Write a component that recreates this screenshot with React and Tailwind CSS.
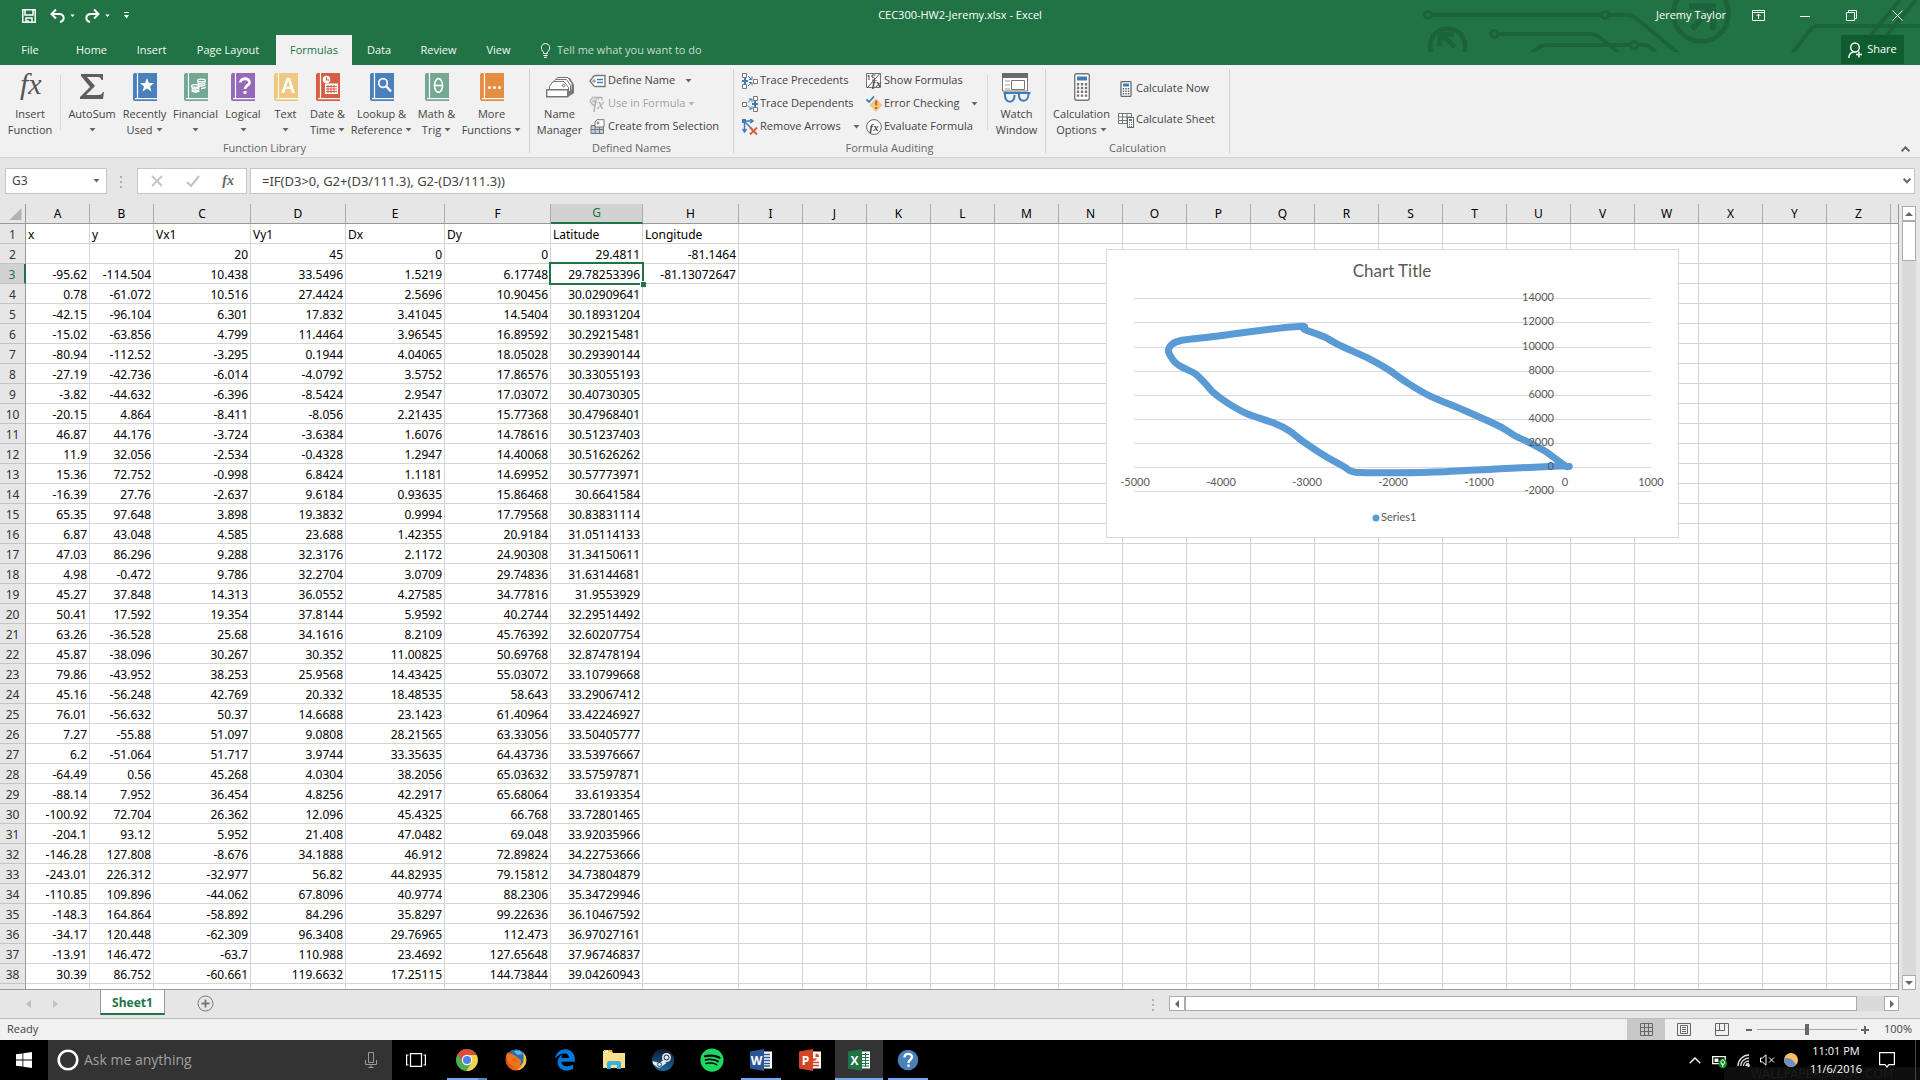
import { FaEdgeLegacy, FaSpotify } from 'react-icons/fa'

const UI_FONT = "font-['Open_Sans','Noto_Sans',sans-serif]"
const CELL_FONT = "font-['Noto_Sans','Open_Sans',sans-serif]"

const COLUMNS = [
  { id: 'A', width: 64 },
  { id: 'B', width: 64 },
  { id: 'C', width: 97 },
  { id: 'D', width: 95 },
  { id: 'E', width: 99 },
  { id: 'F', width: 106 },
  { id: 'G', width: 92 },
  { id: 'H', width: 96 },
  ...'IJKLMNOPQRSTUVWXYZ'.split('').map((id) => ({ id, width: 64 })),
]

const ROWS = `x|y|Vx1|Vy1|Dx|Dy|Latitude|Longitude
||20|45|0|0|29.4811|-81.1464
-95.62|-114.504|10.438|33.5496|1.5219|6.17748|29.78253396|-81.13072647
0.78|-61.072|10.516|27.4424|2.5696|10.90456|30.02909641
-42.15|-96.104|6.301|17.832|3.41045|14.5404|30.18931204
-15.02|-63.856|4.799|11.4464|3.96545|16.89592|30.29215481
-80.94|-112.52|-3.295|0.1944|4.04065|18.05028|30.29390144
-27.19|-42.736|-6.014|-4.0792|3.5752|17.86576|30.33055193
-3.82|-44.632|-6.396|-8.5424|2.9547|17.03072|30.40730305
-20.15|4.864|-8.411|-8.056|2.21435|15.77368|30.47968401
46.87|44.176|-3.724|-3.6384|1.6076|14.78616|30.51237403
11.9|32.056|-2.534|-0.4328|1.2947|14.40068|30.51626262
15.36|72.752|-0.998|6.8424|1.1181|14.69952|30.57773971
-16.39|27.76|-2.637|9.6184|0.93635|15.86468|30.6641584
65.35|97.648|3.898|19.3832|0.9994|17.79568|30.83831114
6.87|43.048|4.585|23.688|1.42355|20.9184|31.05114133
47.03|86.296|9.288|32.3176|2.1172|24.90308|31.34150611
4.98|-0.472|9.786|32.2704|3.0709|29.74836|31.63144681
45.27|37.848|14.313|36.0552|4.27585|34.77816|31.9553929
50.41|17.592|19.354|37.8144|5.9592|40.2744|32.29514492
63.26|-36.528|25.68|34.1616|8.2109|45.76392|32.60207754
45.87|-38.096|30.267|30.352|11.00825|50.69768|32.87478194
79.86|-43.952|38.253|25.9568|14.43425|55.03072|33.10799668
45.16|-56.248|42.769|20.332|18.48535|58.643|33.29067412
76.01|-56.632|50.37|14.6688|23.1423|61.40964|33.42246927
7.27|-55.88|51.097|9.0808|28.21565|63.33056|33.50405777
6.2|-51.064|51.717|3.9744|33.35635|64.43736|33.53976667
-64.49|0.56|45.268|4.0304|38.2056|65.03632|33.57597871
-88.14|7.952|36.454|4.8256|42.2917|65.68064|33.6193354
-100.92|72.704|26.362|12.096|45.4325|66.768|33.72801465
-204.1|93.12|5.952|21.408|47.0482|69.048|33.92035966
-146.28|127.808|-8.676|34.1888|46.912|72.89824|34.22753666
-243.01|226.312|-32.977|56.82|44.82935|79.15812|34.73804879
-110.85|109.896|-44.062|67.8096|40.9774|88.2306|35.34729946
-148.3|164.864|-58.892|84.296|35.8297|99.22636|36.10467592
-34.17|120.448|-62.309|96.3408|29.76965|112.473|36.97027161
-13.91|146.472|-63.7|110.988|23.4692|127.65648|37.96746837
30.39|86.752|-60.661|119.6632|17.25115|144.73844|39.04260943
`
  .split('\n')
  .map((line) => line.split('|'))

const ACTIVE_COL = 6
const ACTIVE_ROW = 2

// [x, y] points of Series1
const SERIES = [
  [49, 55], [0, 110], [-227, 1298], [-404, 1990], [-582, 2597], [-760, 3370], [-1160, 4670],
  [-1560, 5857], [-1827, 6960], [-2049, 8066], [-2271, 8977], [-2627, 10136], [-2804, 10826],
  [-3027, 11430], [-3044, 11690], [-3404, 11460], [-4049, 10853], [-4449, 10522], [-4573, 10136],
  [-4605, 9556], [-4538, 8756], [-4449, 8287], [-4293, 7735], [-4182, 6960], [-4093, 6243],
  [-3916, 5304], [-3693, 4420], [-3382, 3648], [-3204, 3012], [-3027, 2045], [-2782, 885],
  [-2560, 0], [-2440, -440], [-1960, -470], [-1382, -386], [-804, -166], [0, 110],
]

const chartX = (v) => 459 + v * 0.0861
const chartY = (v) => 218 - v * 0.01205

// Catmull-Rom curve through the points, as cubic segments
function smoothPath(points) {
  let d = `M${points[0]}`
  for (let i = 0; i < points.length - 1; i++) {
    const [a, b, c, e] = [points[i - 1] || points[i], points[i], points[i + 1], points[i + 2] || points[i + 1]]
    const c1 = [b[0] + (c[0] - a[0]) / 8, b[1] + (c[1] - a[1]) / 8]
    const c2 = [c[0] - (e[0] - b[0]) / 8, c[1] - (e[1] - b[1]) / 8]
    d += `C${c1} ${c2} ${c}`
  }
  return d
}

function Caret({ className = 'text-[#666]' }) {
  return (
    <svg width="7" height="4" viewBox="0 0 7 4" className={`inline-block shrink-0 ${className}`} aria-hidden="true">
      <path d="M0.5 0h6L3.5 3.5z" fill="currentColor" />
    </svg>
  )
}

/* ---------- title bar ---------- */

function Circuit() {
  return (
    <svg
      className="pointer-events-none absolute top-0 right-0"
      width="500"
      height="52"
      viewBox="0 0 500 52"
      fill="none"
      stroke="#1c633c"
      strokeWidth="4"
      aria-hidden="true"
    >
      <circle cx="8" cy="15" r="3.5" strokeWidth="3" />
      <path d="M12 15h169M190 15h18q4 0 8 3l43 36" />
      <circle cx="185" cy="15" r="3.5" strokeWidth="3" />
      <circle cx="74" cy="34" r="3.5" strokeWidth="3" />
      <path d="M78 34h93q4 0 8 3l19 15M112 52l8-5q3-2 7-2h83" />
      <circle cx="214" cy="45" r="3.5" strokeWidth="3" />
      <path d="M218 45h6q4 0 7 3l5 4" />
      <path d="M12 54a17.500 17.500 0 1 1 31 0" strokeWidth="4.500" />
      <path d="M20 46V34h14M21 34l14 13" strokeWidth="5" />
      <path d="M260 -4a27.500 27.500 0 1 0 42 0" strokeWidth="5" />
      <path d="M269 6.500h24V30M292 7l-20 22" strokeWidth="6" />
      <path d="M372 53l20-25q2-2 5-2h105M450 36L480 0M466 36L496 0" />
    </svg>
  )
}

function TitleBar() {
  return (
    <div className="relative grid h-[35px] grid-cols-[1fr_auto_1fr] items-center pb-1 text-[11px] text-white">
      <div className="flex items-center pl-[22px]">
        <button type="button" aria-label="Save">
          <svg width="14" height="14" viewBox="0 0 14 14" fill="none" stroke="#fff" strokeWidth="1.500">
            <path d="M0.8 0.8h12.400v12.400H0.800zM3 1v5h8V1M4 13V9h6v4M6 11v2" />
          </svg>
        </button>
        <button type="button" aria-label="Undo" className="ml-[14px] flex items-center gap-[5px]">
          <svg width="15" height="14" viewBox="0 0 15 14" fill="none" stroke="#fff" strokeWidth="2">
            <path d="M6 0.500L1.500 5 6 9.500M2 5h7c6 0 6 7 1 8" />
          </svg>
          <Caret className="w-[5px] text-white" />
        </button>
        <button type="button" aria-label="Redo" className="ml-[10px] flex items-center gap-[5px]">
          <svg width="15" height="14" viewBox="0 0 15 14" fill="none" stroke="#fff" strokeWidth="2">
            <path d="M9 0.500L13.500 5 9 9.500M13 5H6C0 5 0 12 5 13" />
          </svg>
          <Caret className="w-[5px] text-white" />
        </button>
        <button type="button" aria-label="Customize Quick Access Toolbar" className="ml-[13px]">
          <svg width="7" height="7" viewBox="0 0 7 7" fill="#fff">
            <path d="M1 0h5v1H1zM1 3h5L3.500 6.500z" />
          </svg>
        </button>
      </div>
      <div>CEC300-HW2-Jeremy.xlsx - Excel</div>
      <div className="z-10 flex items-center justify-end pr-[17px]">
        <span>Jeremy Taylor</span>
        <button type="button" aria-label="Ribbon Display Options" className="ml-[26px]">
          <svg width="13" height="11" viewBox="0 0 13 11" fill="none" stroke="#fff">
            <path d="M0.500 0.500h12v10h-12zM0.500 2.500h12M6.500 9V4M4.500 6l2-2 2 2" />
          </svg>
        </button>
        <button type="button" aria-label="Minimize" className="ml-[35px]">
          <svg width="10" height="10" viewBox="0 0 10 10" stroke="#fff">
            <path d="M0 5.500h10" />
          </svg>
        </button>
        <button type="button" aria-label="Restore" className="ml-[36px]">
          <svg width="11" height="11" viewBox="0 0 11 11" fill="none" stroke="#fff">
            <path d="M0.500 2.500h8v8h-8zM2.500 2.500v-2h8v8h-2" />
          </svg>
        </button>
        <button type="button" aria-label="Close" className="ml-[35px]">
          <svg width="11" height="11" viewBox="0 0 11 11" fill="none" stroke="#fff">
            <path d="M0.500 0.500l10 10M10.500 0.500l-10 10" />
          </svg>
        </button>
      </div>
    </div>
  )
}

const TABS = [
  ['File', 'w-[60px]'],
  ['Home', 'w-[63px]'],
  ['Insert', 'w-[57px]'],
  ['Page Layout', 'w-24'],
  ['Formulas', 'w-[76px]'],
  ['Data', 'w-[54px]'],
  ['Review', 'w-[65px]'],
  ['View', 'w-[55px]'],
]

function TabRow() {
  return (
    <div className="relative flex h-[30px] text-[11px] text-[#f3f8f5]">
      {TABS.map(([name, width]) => (
        <button
          key={name}
          type="button"
          className={`${width} ${name === 'Formulas' ? 'bg-[#f1f1f1] text-[#217346]' : ''}`}
        >
          {name}
        </button>
      ))}
      <button type="button" className="ml-[14px] flex items-center gap-[6px] text-[#c3dccd]">
        <svg width="11" height="15" viewBox="0 0 11 15" fill="none" stroke="#fff">
          <path d="M3.500 10.500V9C0 6 1 0.600 5.500 0.600S11 6 7.500 9v1.500zM3.500 12.500h4M4 14.300h3" />
        </svg>
        Tell me what you want to do
      </button>
      <button
        type="button"
        className="mr-4 ml-auto flex h-[29px] w-[63px] items-center justify-center gap-[5px] bg-[#0f5c2f] text-white"
      >
        <svg width="14" height="16" viewBox="0 0 14 16" fill="none" stroke="#fff" strokeWidth="1.400">
          <path d="M7 1a4 4.200 0 0 1 0 9 4 4.200 0 0 1 0-9zM0.800 16c0-3.500 1.500-5 4.200-6M8 12.500h6M11 9.500v6" />
        </svg>
        Share
      </button>
    </div>
  )
}

/* ---------- ribbon ---------- */

function Book({ color, children }) {
  return (
    <svg width="24" height="28" viewBox="0 0 24 28" aria-hidden="true">
      <path d="M2 0h22v28H2a2 2 0 0 1-2-2V2a2 2 0 0 1 2-2z" fill={color} />
      <path d="M4.500 0v25M2 25.700h22" stroke="#fff" strokeWidth="1.200" fill="none" />
      <g fill="#fff">{children}</g>
    </svg>
  )
}

const ICONS = {
  fx: (
    <svg width="28" height="28" viewBox="0 0 28 28" className="overflow-visible">
      <text x="4" y="21" fontSize="30" fontStyle="italic" fontFamily="Liberation Serif, serif" fill="#555">
        fx
      </text>
    </svg>
  ),
  sigma: (
    <svg width="24" height="28" viewBox="0 0 24 28" fill="#5e5e5e">
      <path d="M1 1h22v6h-1.500c-.5-2-1.500-3-4-3H7l8 9-9 9h12c3 0 4-1 5-3h1l-1 7H0v-2l10-10L1 3z" />
    </svg>
  ),
  recent: (
    <Book color="#4a80bb">
      <path d="M14 5l2 5h5l-4 3.500 1.500 5L14 15.500 9.500 18.500l1.500-5L7 10h5z" />
    </Book>
  ),
  financial: (
    <Book color="#74a794">
      <g fill="none" stroke="#fff" strokeWidth="1.300">
        <ellipse cx="17.500" cy="7.500" rx="4" ry="1.400" />
        <path d="M13.500 9.500c1 2 7 2 8 0M13.500 11.500c1 2 7 2 8 0M17 15.500c2 0 4-.5 4.500-1.500" />
        <ellipse cx="11.500" cy="13" rx="4" ry="1.400" />
        <path d="M7.500 14.500c1 2 7 2 8 0M7.500 16.500c1 2 7 2 8 0M7.500 18c1 1.500 7 1.500 8 0" />
      </g>
    </Book>
  ),
  logical: (
    <Book color="#9668b8">
      <path d="M9.500 9.500c0-5 9-5 9 0 0 3-4.500 3-4.500 6.500" fill="none" stroke="#fff" strokeWidth="2.800" />
      <path d="M12.500 18h3v3h-3z" />
    </Book>
  ),
  text: (
    <Book color="#edc87e">
      <path d="M12.500 5h3.500l5 15h-3l-1.200-4h-5.300L10.300 20h-3zM12.200 13.700h3.900L14.200 7.500z" />
    </Book>
  ),
  date: (
    <Book color="#d65f43">
      <circle cx="10.500" cy="6.500" r="3.800" />
      <path d="M10.500 4v3h2.500" stroke="#d65f43" fill="none" />
      <path d="M9 10.500h13v10.500H9z" />
      <path d="M10 13.500h11M10 16h11M10 18.500h11M12 12v8M15 12v8M18 12v8" stroke="#d65f43" fill="none" />
    </Book>
  ),
  lookup: (
    <Book color="#4a80bb">
      <g fill="none" stroke="#fff" strokeWidth="1.700">
        <circle cx="13" cy="10" r="4.300" />
        <path d="M16 13l5 5.500" strokeWidth="2.400" />
      </g>
    </Book>
  ),
  math: (
    <Book color="#74a794">
      <g fill="none" stroke="#fff" strokeWidth="1.700">
        <ellipse cx="13.500" cy="12.500" rx="4" ry="6.800" />
        <path d="M9.500 12.500h8" />
      </g>
    </Book>
  ),
  more: (
    <Book color="#e58d42">
      <circle cx="9.500" cy="14.500" r="1.500" />
      <circle cx="14.500" cy="14.500" r="1.500" />
      <circle cx="19.500" cy="14.500" r="1.500" />
    </Book>
  ),
  names: (
    <svg width="28" height="28" viewBox="0 0 28 28" fill="#fff" stroke="#777">
      <path d="M22 5h2l4 7v8l-6 4z" fill="#777" stroke="none" />
      <path d="M8.500 9l3-4.500H22l4 6v6" />
      <path d="M6.500 11l3-4.500h11l4 6v6" />
      <path d="M3.500 16.500v-3l3.500-5h11l4.500 6v6" />
      <circle cx="17.500" cy="12.500" r="1.300" />
      <path d="M0.700 16.700h21v7h-21z" strokeWidth="1.400" />
    </svg>
  ),
  watch: (
    <svg width="29" height="30" viewBox="0 0 29 30" fill="none">
      <path d="M0.500 0.500h25V18h-25z" fill="#fff" stroke="#777" />
      <path d="M0 0h26v5H0z" fill="#6a6a6a" />
      <path d="M9.500 7.500h13v9h-13z" stroke="#777" />
      <path d="M3 8h5M3 12h5M3 16h5" stroke="#999" />
      <g stroke="#3f7cba" strokeWidth="2">
        <path d="M1.500 20h27M3 21c-1 10 10 10 9.500 1M17 21c-1 9 9.500 9 9.500 0" fill="#f1f1f1" />
      </g>
    </svg>
  ),
  calculator: (
    <svg width="16" height="28" viewBox="0 0 16 28" fill="none">
      <rect x="0.700" y="0.700" width="18.600" height="26.600" rx="2" fill="none" />
      <rect x="0.700" y="0.700" width="14.600" height="26.600" rx="2" fill="#fff" stroke="#777" strokeWidth="1.400" />
      <path d="M3 3.500h10v4H3z" fill="#3f7cba" />
      <path d="M4 10v14M8 10v14M12 10v14" stroke="#777" strokeWidth="2.400" strokeDasharray="2.400 1.400" />
    </svg>
  ),
  define: (
    <svg width="17" height="16" viewBox="0 0 17 16" fill="none">
      <path d="M1 8l3.500-4.500q.7-1 2-1h9.500v11H6.500q-1.300 0-2-1z" fill="#fff" stroke="#777" strokeWidth="1.300" />
      <circle cx="5" cy="8" r="1.200" stroke="#777" />
      <path d="M8 6.500h6M8 9.500h6" stroke="#3f7cba" strokeWidth="1.300" />
    </svg>
  ),
  useFx: (
    <svg width="17" height="16" viewBox="0 0 17 16" fill="none" stroke="#b5b5b5">
      <path d="M6 9L4 9 1 5.500 3.500 1.500H13v3" strokeWidth="1.300" />
      <circle cx="4.500" cy="5" r="1" />
      <text x="4" y="13" fontSize="15" fontStyle="italic" fontFamily="Liberation Serif, serif" fill="#a5a5a5" stroke="none">
        fx
      </text>
    </svg>
  ),
  create: (
    <svg width="15" height="16" viewBox="0 0 15 16" fill="none">
      <path d="M1 6.500h12.500v8H1z" fill="#b9cfe8" stroke="#777" />
      <path d="M1 10.500h12M5 6v8.500M9.500 6v8.500" stroke="#777" />
      <path d="M5 8V3l2-2.300h7V8z" fill="#fff" stroke="#777" />
      <circle cx="8" cy="4" r="1" stroke="#777" />
    </svg>
  ),
  precedents: (
    <svg width="16" height="16" viewBox="0 0 16 16" fill="none">
      <path d="M0.500 0.500h4v4h-4zM0.500 11.500h4v4h-4zM11.500 6.500h4v4h-4z" fill="#fff" stroke="#777" />
      <path d="M0 8h6M3 5v6" stroke="#3f7cba" strokeWidth="2" />
      <path d="M6 3l3.500 3.500M6 13l3.500-3.500M7 6.500h3v-3M7 9.500h3v3" stroke="#3f7cba" />
    </svg>
  ),
  dependents: (
    <svg width="16" height="16" viewBox="0 0 16 16" fill="none">
      <path d="M11.500 0.500h4v4h-4zM11.500 11.500h4v4h-4zM0.500 6.500h4v4h-4z" fill="#fff" stroke="#777" />
      <path d="M10 8h6M13 5v6" stroke="#3f7cba" strokeWidth="2" />
      <path d="M6 6.500L9.500 3M6 9.500l3.500 3.500M7 3h3v3M7 13h3v-3" stroke="#3f7cba" />
    </svg>
  ),
  remove: (
    <svg width="16" height="16" viewBox="0 0 16 16" fill="none">
      <g stroke="#3f7cba" strokeWidth="1.500">
        <path d="M2 2h8M2.500 2v11M2 2l8 8" />
        <path d="M8 0l3 2-3 2M0.500 10l2 3 2-3" />
      </g>
      <path d="M0 0h4v4H0z" fill="#3f7cba" />
      <path d="M8 8.500l7 7M15 8.500l-7 7" stroke="#d65f43" strokeWidth="2" />
    </svg>
  ),
  show: (
    <svg width="16" height="16" viewBox="0 0 16 16" fill="none">
      <path d="M0.500 0.500h14v14h-14z" fill="#fff" stroke="#777" />
      <path d="M14 0.500L1 15" stroke="#555" />
      <path d="M3 2v5M1.500 3H3M9.500 2H6v2.300c3-.5 4 2.500 0 3" stroke="#444" />
      <text x="6" y="14" fontSize="11" fontStyle="italic" fontWeight="bold" fontFamily="Liberation Serif, serif" fill="#444">
        fx
      </text>
    </svg>
  ),
  error: (
    <svg width="16" height="16" viewBox="0 0 16 16" fill="none">
      <path d="M10 3l6 6-6 6.500L4 9z" fill="#edc87e" stroke="#edc87e" strokeLinejoin="round" />
      <path d="M9.200 4.500h2v5h-2zM9.200 11h2v2h-2z" fill="#d2572f" />
      <path d="M0.500 3.500L3 6l5-5.500" stroke="#3f7cba" strokeWidth="1.800" />
    </svg>
  ),
  evaluate: (
    <svg width="16" height="16" viewBox="0 0 16 16">
      <circle cx="8" cy="8" r="7.400" fill="#fff" stroke="#666" />
      <text x="3.500" y="11.500" fontSize="11" fontStyle="italic" fontWeight="bold" fontFamily="Liberation Serif, serif" fill="#444">
        fx
      </text>
    </svg>
  ),
  calcNow: (
    <svg width="12" height="16" viewBox="0 0 12 16" fill="none">
      <rect x="1" y="0.600" width="10" height="14.800" rx="1" fill="#fff" stroke="#666" strokeWidth="1.300" />
      <path d="M3 2.500h6v3H3z" fill="#3f7cba" />
      <path d="M3.500 7v7M6 7v7M8.500 7v7" stroke="#666" strokeWidth="1.500" strokeDasharray="1.500 1" />
    </svg>
  ),
  calcSheet: (
    <svg width="16" height="16" viewBox="0 0 16 16" fill="none">
      <path d="M0.500 1.500h13v10h-13zM0.500 5h13M0.500 8.500h13M4.500 1.500v10M9 1.500v10" fill="#fff" stroke="#777" />
      <rect x="9.500" y="5.500" width="6" height="10" fill="#fff" stroke="#666" />
      <path d="M11 7h3v2h-3z" fill="#3f7cba" />
      <path d="M11.500 10v5M13.500 10v5" stroke="#666" strokeDasharray="1 1" />
    </svg>
  ),
}

function BigButton({ icon, lines, width, caret }) {
  return (
    <button type="button" className={`${width} flex shrink-0 flex-col items-center whitespace-nowrap`}>
      <span className="mb-[5px] flex h-7 items-start">{ICONS[icon]}</span>
      <span className="leading-4">{lines[0]}</span>
      <span className="flex h-4 items-center gap-[3px] leading-4">
        {lines[1]}
        {caret && <Caret />}
      </span>
    </button>
  )
}

function SmallButton({ icon, label, caret, disabled, gap = 'gap-2' }) {
  return (
    <button
      type="button"
      disabled={disabled}
      className={`flex h-[23px] items-center whitespace-nowrap ${disabled ? 'text-[#a3a3a3]' : ''}`}
    >
      <span className="mr-[2px] flex w-[17px] justify-center">{ICONS[icon]}</span>
      <span className={`flex items-center ${gap}`}>
        {label}
        {caret && <Caret className={disabled ? 'text-[#b5b5b5]' : 'text-[#666]'} />}
      </span>
    </button>
  )
}

function Group({ label, width, children }) {
  return (
    <section aria-label={label} className={`${width} flex shrink-0`}>
      <div className="flex min-w-0 flex-1 flex-col justify-between pt-2">
        <div className="flex">{children}</div>
        <div className="pb-px text-center leading-4 text-[#666]">{label}</div>
      </div>
      <div className="my-1 w-px bg-[#d2d2d2]" />
    </section>
  )
}

function Ribbon() {
  return (
    <div className="flex h-[93px] border-b border-[#d2d2d2] bg-[#f1f1f1] text-[11px] text-[#444]">
      <Group label="Function Library" width="w-[530px]">
        <BigButton icon="fx" lines={['Insert', 'Function']} width="w-[60px]" />
        <div className="mt-[2px] mr-[5px] h-[55px] w-px bg-[#d8d8d8]" />
        <BigButton icon="sigma" lines={['AutoSum']} width="w-[52px]" caret />
        <BigButton icon="recent" lines={['Recently', 'Used']} width="w-[53px]" caret />
        <BigButton icon="financial" lines={['Financial']} width="w-[49px]" caret />
        <BigButton icon="logical" lines={['Logical']} width="w-[46px]" caret />
        <BigButton icon="text" lines={['Text']} width="w-[39px]" caret />
        <BigButton icon="date" lines={['Date &', 'Time']} width="w-[45px]" caret />
        <BigButton icon="lookup" lines={['Lookup &', 'Reference']} width="w-[63px]" caret />
        <BigButton icon="math" lines={['Math &', 'Trig']} width="w-[47px]" caret />
        <BigButton icon="more" lines={['More', 'Functions']} width="w-[63px]" caret />
      </Group>
      <Group label="Defined Names" width="w-[204px]">
        <BigButton icon="names" lines={['Name', 'Manager']} width="w-[59px]" />
        <div className="-mt-1">
          <SmallButton icon="define" label="Define Name" caret gap="gap-[10px]" />
          <SmallButton icon="useFx" label="Use in Formula" caret disabled gap="gap-[3px]" />
          <SmallButton icon="create" label="Create from Selection" />
        </div>
      </Group>
      <Group label="Formula Auditing" width="w-[312px]">
        <div className="-mt-1 ml-[7px] w-[124px]">
          <SmallButton icon="precedents" label="Trace Precedents" />
          <SmallButton icon="dependents" label="Trace Dependents" />
          <SmallButton icon="remove" label="Remove Arrows" caret gap="gap-3" />
        </div>
        <div className="-mt-1 w-[122px]">
          <SmallButton icon="show" label="Show Formulas" />
          <SmallButton icon="error" label="Error Checking" caret gap="gap-3" />
          <SmallButton icon="evaluate" label="Evaluate Formula" />
        </div>
        <div className="mt-[2px] h-[55px] w-px bg-[#d8d8d8]" />
        <BigButton icon="watch" lines={['Watch', 'Window']} width="w-[57px]" />
      </Group>
      <Group label="Calculation" width="w-[184px]">
        <BigButton icon="calculator" lines={['Calculation', 'Options']} width="w-[71px]" caret />
        <div className="flex flex-col gap-2 pt-1">
          <SmallButton icon="calcNow" label="Calculate Now" />
          <SmallButton icon="calcSheet" label="Calculate Sheet" />
        </div>
      </Group>
      <button type="button" aria-label="Collapse the Ribbon" className="mt-auto mr-[10px] mb-[5px] ml-auto">
        <svg width="9" height="6" viewBox="0 0 9 6" fill="none" stroke="#666" strokeWidth="2">
          <path d="M0.700 5.300l3.800-4 3.800 4" />
        </svg>
      </button>
    </div>
  )
}

/* ---------- formula bar ---------- */

function FormulaBar() {
  return (
    <div className={`${CELL_FONT} flex h-[46px] items-start bg-[#e6e6e6] pt-[10px] pr-[5px] pl-[5px] text-[13px] text-[#444]`}>
      <div className="flex h-[26px] w-[102px] items-center border border-[#c6c6c6] bg-white pr-[6px]">
        <input aria-label="Name Box" defaultValue="G3" className="min-w-0 flex-1 bg-transparent pl-[6px] text-xs outline-none" />
        <Caret className="text-[#666]" />
      </div>
      <div className="mx-[13px] mt-2 flex w-1 flex-col gap-[3px]">
        <i className="size-[2px] bg-[#b0b0b0]" />
        <i className="size-[2px] bg-[#b0b0b0]" />
        <i className="size-[2px] bg-[#b0b0b0]" />
      </div>
      <div className="flex h-[26px] w-[110px] items-center justify-between border border-[#c6c6c6] bg-white pr-3 pl-[13px]">
        <button type="button" aria-label="Cancel">
          <svg width="12" height="12" viewBox="0 0 12 12" stroke="#c4c4c4" strokeWidth="1.800">
            <path d="M1 1l10 10M11 1L1 11" />
          </svg>
        </button>
        <button type="button" aria-label="Enter">
          <svg width="14" height="12" viewBox="0 0 14 12" fill="none" stroke="#c4c4c4" strokeWidth="2.200">
            <path d="M1 7l4 4 8-10" />
          </svg>
        </button>
        <button
          type="button"
          aria-label="Insert Function"
          className="pb-px font-['Liberation_Serif',serif] text-sm leading-none font-bold text-[#666] italic"
        >
          fx
        </button>
      </div>
      <div className="ml-[3px] flex h-[26px] flex-1 items-center border border-[#c6c6c6] bg-white pr-[3px]">
        <input
          aria-label="Formula Bar"
          defaultValue="=IF(D3>0, G2+(D3/111.3), G2-(D3/111.3))"
          className="min-w-0 flex-1 bg-transparent pt-px pl-[11px] outline-none"
        />
        <button type="button" aria-label="Expand Formula Bar">
          <svg width="8" height="6" viewBox="0 0 8 6" fill="none" stroke="#666" strokeWidth="2">
            <path d="M0.700 0.700L4 4.300 7.300 0.700" />
          </svg>
        </button>
      </div>
    </div>
  )
}

/* ---------- sheet ---------- */

function Chart() {
  const line = smoothPath(SERIES.map(([x, y]) => [chartX(x), chartY(y)]))
  const yTicks = [14000, 12000, 10000, 8000, 6000, 4000, 2000, 0, -2000]
  const xTicks = [-5000, -4000, -3000, -2000, -1000, 0, 1000]

  return (
    <div className="absolute top-[45px] left-[1106px] border border-[#d9d9d9] bg-white">
      <svg
        width="571"
        height="287"
        viewBox="1 1 571 287"
        className="block font-['Lato',sans-serif]"
        fill="#595959"
        role="img"
        aria-label="Scatter chart of Series1"
      >
        <text x="286" y="28" fontSize="17" textAnchor="middle">
          Chart Title
        </text>
        {yTicks.map((t) => (
          <path key={t} d={`M28 ${Math.round(chartY(t)) + 0.5}h517`} stroke="#d9d9d9" />
        ))}
        <path d={line} fill="none" stroke="#5b9bd5" strokeWidth="7" strokeLinejoin="round" strokeLinecap="round" />
        <g fontSize="11">
          {yTicks.map((t) => (
            <text key={t} x="448" y={Math.round(chartY(t)) + 3} textAnchor="end">
              {t}
            </text>
          ))}
          {xTicks.map((t) => (
            <text key={t} x={Math.round(chartX(t))} y="237" textAnchor="middle">
              {t}
            </text>
          ))}
          <circle cx="270" cy="269" r="3.500" fill="#5b9bd5" />
          <text x="275" y="272">
            Series1
          </text>
        </g>
      </svg>
    </div>
  )
}

function Sheet() {
  return (
    <div className="relative min-w-0 flex-1 overflow-hidden border-r border-b border-[#999] bg-white">
      <table className={`${CELL_FONT} w-[1955px] table-fixed border-separate border-spacing-0 text-xs text-black`}>
        <colgroup>
          <col className="w-[26px]" />
          {COLUMNS.map((c) => (
            <col key={c.id} style={{ width: c.width }} />
          ))}
          <col className="w-16" />
        </colgroup>
        <thead>
          <tr className="h-5 bg-[#e6e6e6]">
            <th className="border-r border-b border-[#999] p-0">
              <svg width="13" height="12" viewBox="0 0 13 12" className="ml-auto mr-[3px]" aria-label="Select all">
                <path d="M12.500 0v12H0.500z" fill="#b2b2b2" />
              </svg>
            </th>
            {COLUMNS.map((c, i) => (
              <th
                key={c.id}
                scope="col"
                className={`h-5 border-r border-r-[#ababab] p-0 leading-[18px] font-normal ${
                  i === ACTIVE_COL
                    ? 'border-b-2 border-b-[#217346] bg-[#d2d2d2] text-[#217346]'
                    : 'border-b border-b-[#999]'
                }`}
              >
                {c.id}
              </th>
            ))}
            <th className="border-b border-[#999] p-0" />
          </tr>
        </thead>
        <tbody>
          {ROWS.map((row, r) => (
            <tr key={r} className="h-5">
              <th
                scope="row"
                className={`h-5 border-r border-b border-b-[#c4c4c4] px-0 pt-[2px] pb-0 leading-[17px] font-normal ${
                  r === ACTIVE_ROW
                    ? 'border-r-2 border-r-[#217346] bg-[#d2d2d2] text-[#217346]'
                    : 'border-r-[#999] bg-[#e6e6e6] text-[#333]'
                }`}
              >
                {row.length > 1 && r + 1}
              </th>
              {COLUMNS.map((c, i) => (
                <td
                  key={c.id}
                  className={`relative h-5 border-r border-b border-[#d4d4d4] px-[2px] pt-[2px] pb-0 leading-[17px] ${
                    r === 0 ? 'text-left' : 'text-right'
                  }`}
                >
                  {row[i]}
                  {r === ACTIVE_ROW && i === ACTIVE_COL && (
                    <span className="absolute -inset-[2px] z-10 border-2 border-[#217346]">
                      <span className="absolute -right-1 -bottom-1 size-[6px] border-t border-l border-white bg-[#217346]" />
                    </span>
                  )}
                </td>
              ))}
              <td className="border-b border-[#d4d4d4] p-0" />
            </tr>
          ))}
        </tbody>
      </table>
      <Chart />
    </div>
  )
}

function ScrollArrow({ label, d, className }) {
  return (
    <button
      type="button"
      aria-label={label}
      className={`${className} flex shrink-0 items-center justify-center border border-[#ababab] bg-white`}
    >
      <svg width="8" height="8" viewBox="0 0 8 8" fill="#666">
        <path d={d} />
      </svg>
    </button>
  )
}

function SheetTabs() {
  return (
    <div className="flex h-[28px] items-start bg-[#e6e6e6]">
      <div className="flex h-7 w-[100px] items-center gap-[22px] pl-[26px]">
        <button type="button" aria-label="Previous sheet" disabled>
          <svg width="5" height="8" viewBox="0 0 5 8">
            <path d="M5 0v8L0 4z" fill="#c0c0c0" />
          </svg>
        </button>
        <button type="button" aria-label="Next sheet" disabled>
          <svg width="5" height="8" viewBox="0 0 5 8">
            <path d="M0 0v8l5-4z" fill="#c0c0c0" />
          </svg>
        </button>
      </div>
      <button
        type="button"
        className={`${CELL_FONT} h-[25px] w-[65px] border-x border-b-2 border-x-[#999] border-b-[#217346] bg-white pt-[2px] text-xs font-bold text-[#217346]`}
      >
        Sheet1
      </button>
      <button type="button" aria-label="New sheet" className="mt-[5px] ml-8">
        <svg width="17" height="17" viewBox="0 0 17 17" fill="none" stroke="#777">
          <circle cx="8.500" cy="8.500" r="7.500" />
          <path d="M8.500 4.500v8M4.500 8.500h8" strokeWidth="1.800" />
        </svg>
      </button>
      <div className="mt-[9px] mr-[15px] ml-auto flex flex-col gap-[3px]">
        <i className="size-[2px] bg-[#b0b0b0]" />
        <i className="size-[2px] bg-[#b0b0b0]" />
        <i className="size-[2px] bg-[#b0b0b0]" />
      </div>
      <div className="mt-[6px] mr-[21px] flex h-[15px] w-[38%] bg-[#dadada]">
        <ScrollArrow label="Scroll left" d="M6 0v8L2 4z" className="w-4" />
        <div className="mr-[27px] flex-1 border border-[#ababab] bg-white" />
        <ScrollArrow label="Scroll right" d="M2 0v8l4-4z" className="w-[15px]" />
      </div>
    </div>
  )
}

function StatusBar() {
  return (
    <div className="flex h-[22px] items-center border-t border-[#bdbdbd] bg-[#f1f1f1] text-[11px] text-[#444]">
      <span className="pl-[7px]">Ready</span>
      <div className="ml-auto flex h-full">
        <button type="button" aria-label="Normal" className="flex w-[38px] items-center justify-center bg-[#c8c8c8]">
          <svg width="13" height="13" viewBox="0 0 13 13" fill="none" stroke="#666">
            <path d="M0.500 0.500h12v12h-12zM0.500 4.500h12M0.500 8.500h12M4.500 0.500v12M8.500 0.500v12" />
          </svg>
        </button>
        <button type="button" aria-label="Page Layout" className="flex w-[38px] items-center justify-center">
          <svg width="14" height="13" viewBox="0 0 14 13" fill="none" stroke="#666">
            <path d="M0.500 0.500h13v12h-13zM3.500 2.500h7v8h-7zM5 4.500h4M5 6.500h4M5 8.500h4" />
          </svg>
        </button>
        <button type="button" aria-label="Page Break Preview" className="flex w-[38px] items-center justify-center">
          <svg width="14" height="13" viewBox="0 0 14 13" fill="none" stroke="#666">
            <path d="M0.500 0.500h13v12h-13zM4.500 0.500v7M9.500 0.500v7M0.500 7.500h9" />
          </svg>
        </button>
      </div>
      <button type="button" aria-label="Zoom out" className="ml-[5px] h-[2px] w-[6px] bg-[#666]" />
      <div className="relative ml-[5px] flex w-[100px] items-center">
        <div className="absolute h-px w-full bg-[#a6a6a6]" />
        <input
          type="range"
          min="0"
          max="100"
          defaultValue="50"
          aria-label="Zoom"
          className="relative h-[11px] w-full appearance-none bg-transparent [&::-webkit-slider-thumb]:h-[11px] [&::-webkit-slider-thumb]:w-1 [&::-webkit-slider-thumb]:appearance-none [&::-webkit-slider-thumb]:bg-[#666]"
        />
      </div>
      <button type="button" aria-label="Zoom in" className="ml-1">
        <svg width="8" height="8" viewBox="0 0 8 8" stroke="#666" strokeWidth="2">
          <path d="M0 4h8M4 0v8" />
        </svg>
      </button>
      <span className="w-[51px] pr-2 text-right">100%</span>
    </div>
  )
}

/* ---------- taskbar ---------- */

function OfficeIcon({ color, letter, children }) {
  return (
    <svg width="23" height="22" viewBox="0 0 23 22">
      <path d="M11 2.500h11v17H11z" fill="#fff" />
      {children}
      <path d="M0 2.500L14 0v22L0 19.500z" fill={color} />
      <text x="6.500" y="15.500" fontSize="12" fontWeight="bold" textAnchor="middle" fontFamily="Open Sans, sans-serif" fill="#fff">
        {letter}
      </text>
    </svg>
  )
}

const APPS = [
  {
    name: 'Google Chrome',
    running: 'w-10 bg-linear-to-r from-[#76a9f5] from-78% to-[#5a84c2] to-78%',
    icon: (
      <svg width="22" height="22" viewBox="0 0 22 22">
        <circle cx="11" cy="11" r="11" fill="#4caf50" />
        <path d="M1.500 5.500L6.700 13.500 11 6H20.500A11 11 0 0 0 1.500 5.500z" fill="#e0483b" />
        <path d="M20.500 6A11 11 0 0 1 10.500 22L15.500 13.500 13.500 6z" fill="#fcd045" />
        <circle cx="11" cy="11" r="5.200" fill="#fff" />
        <circle cx="11" cy="11" r="4.100" fill="#4a86e8" />
      </svg>
    ),
  },
  {
    name: 'Firefox',
    icon: (
      <svg width="22" height="22" viewBox="0 0 22 22">
        <defs>
          <linearGradient id="fox" x1="0" x2="1" y1="0" y2="0">
            <stop offset="0" stopColor="#d9480f" />
            <stop offset="0.7" stopColor="#f07a1a" />
            <stop offset="1" stopColor="#f9c74f" />
          </linearGradient>
        </defs>
        <circle cx="11" cy="11" r="10.500" fill="url(#fox)" />
        <path d="M4 4C8-1 17 0 19 5c2 5 0 10-5 12 2-2 3-5 1-7-3-1-3-3-5-3-2-1-4-3-6-3z" fill="#1f6fb5" />
        <path d="M9 2.500c3-2 7-1 9 3-2-1-4 1-6 0z" fill="#5fb4e6" />
        <path d="M1 8c0-2 1-4 2-5 0 1 1 2 2 2 2 0 3 0 4 1l2 2-3 2c-1 1 0 3 2 4l4 0c-2 4-9 3-11-1z" fill="#ee7420" />
        <path d="M18 4c3 4 4 8 1 13-2 3-5 4-7 4 5-3 8-8 6-17z" fill="#fbc540" />
      </svg>
    ),
  },
  { name: 'Microsoft Edge', icon: <FaEdgeLegacy className="size-[22px] text-[#0078d7]" /> },
  {
    name: 'File Explorer',
    icon: (
      <svg width="22" height="20" viewBox="0 0 22 20">
        <path d="M0 1h9l1 2h12v15H0z" fill="#ffe08a" />
        <path d="M1 0h8v2H1z" fill="#f5b92b" />
        <path d="M2 0.500h3v1.500H2z" fill="#fff" />
        <path d="M4 19v-6q0-2 2-2h10q2 0 2 2v6h-4v-4H8v4z" fill="#36b1ea" />
      </svg>
    ),
  },
  {
    name: 'Steam',
    icon: (
      <svg width="22" height="22" viewBox="0 0 22 22">
        <defs>
          <linearGradient id="steam" x1="0" x2="0" y1="0" y2="1">
            <stop offset="0" stopColor="#10182e" />
            <stop offset="1" stopColor="#1b6ea8" />
          </linearGradient>
        </defs>
        <circle cx="11" cy="11" r="11" fill="url(#steam)" />
        <path d="M0.500 12l7 2 4-3 3 3-5 3.500a3.500 3.500 0 0 1-5 0L1 15z" fill="#e8ecf0" />
        <circle cx="14.500" cy="8.500" r="4.500" fill="#e8ecf0" />
        <circle cx="14.500" cy="8.500" r="2.500" fill="#e8ecf0" stroke="#1d2b47" />
        <circle cx="7.500" cy="15.500" r="2" fill="none" stroke="#1d4a78" />
      </svg>
    ),
  },
  { name: 'Spotify', icon: <FaSpotify className="size-6 text-[#1ed760]" /> },
  {
    name: 'Word',
    running: 'w-10 bg-[#76a9f5]',
    icon: (
      <OfficeIcon color="#2a5699" letter="W">
        <path d="M14 5.500h6M14 8.500h6M14 11.500h6M14 14.500h6M14 17h6" stroke="#2a5699" strokeWidth="1.300" />
      </OfficeIcon>
    ),
  },
  {
    name: 'PowerPoint',
    icon: (
      <OfficeIcon color="#d24625" letter="P">
        <path d="M14 13.500h6M14 16.500h6" stroke="#d24625" strokeWidth="1.500" />
        <path d="M14 5.500a3.200 3.200 0 1 0 4 4h-4zM16.500 4.500v3.500H20a3.500 3.500 0 0 0-3.500-3.500z" fill="#d24625" />
      </OfficeIcon>
    ),
  },
  {
    name: 'Excel',
    active: true,
    running: 'w-full bg-[#76a9f5]',
    icon: (
      <OfficeIcon color="#217346" letter="X">
        <path d="M14 5.500h7M14 8.500h7M14 11.500h7M14 14.500h7M14 17h7M17.500 4v14" stroke="#217346" />
      </OfficeIcon>
    ),
  },
  {
    name: 'Help',
    running: 'w-10 bg-[#76a9f5]',
    icon: (
      <svg width="22" height="22" viewBox="0 0 22 22">
        <circle cx="11" cy="11" r="10.300" fill="#4a80bb" />
        <path d="M7.500 8.500c0-5 7.500-4.500 7.500-.5 0 2.500-3.500 3-3.500 6" fill="none" stroke="#fff" strokeWidth="2.300" />
        <path d="M10.300 15.500h2.400v2.300h-2.400z" fill="#fff" />
      </svg>
    ),
  },
]

function Tray() {
  return (
    <div className="relative ml-auto flex items-center">
      <div className="absolute right-0 bottom-0 flex h-[13px] w-[196px] items-center justify-center rounded-tl bg-[#0e0e0e] font-['DejaVu_Sans',sans-serif] text-xs leading-none whitespace-nowrap text-[#1c1c1c]">
        WALLPAPERSWIDE.COM
      </div>
      <div className="relative flex items-center">
        <button type="button" aria-label="Show hidden icons" className="flex w-6 justify-center">
          <svg width="12" height="7" viewBox="0 0 12 7" fill="none" stroke="#fff" strokeWidth="1.300">
            <path d="M0.700 6.300L6 1l5.300 5.300" />
          </svg>
        </button>
        <button type="button" aria-label="Battery" className="flex w-6 justify-center">
          <svg width="15" height="14" viewBox="0 0 15 14" fill="none" className="mt-[3px]">
            <path d="M0.700 1.700h12.500v7H0.700z" stroke="#fff" strokeWidth="1.300" />
            <path d="M2.500 3.500h4v3.500h-4z" fill="#fff" />
            <ellipse cx="10.800" cy="8.500" rx="4.200" ry="5" fill="#0f8a1f" />
            <path d="M10.800 12V8M9 6.500l1.800-2 1.800 2v2l-1.800 1.500L9 8.500z" stroke="#fff" />
          </svg>
        </button>
        <button type="button" aria-label="Wireless network" className="flex w-6 justify-center">
          <svg width="13" height="13" viewBox="0 0 13 13" fill="none" stroke="#ddd" strokeWidth="1.300">
            <path d="M1 12C1 6 6 1 12 1M3.800 12C4 7.500 7.500 4 12 4M6.500 12C6.500 9 9 7 12 7M9 12c0-1.500 1-2.500 3-2.500" />
            <circle cx="11.500" cy="11.500" r="0.800" fill="#fff" />
          </svg>
        </button>
        <button type="button" aria-label="Volume muted" className="flex w-6 justify-center">
          <svg width="15" height="12" viewBox="0 0 15 12" fill="none" stroke="#fff">
            <path d="M0.500 4h2L6 0.800v10.400L2.500 8h-2zM9 3.500l5 5M14 3.500l-5 5" />
          </svg>
        </button>
        <button type="button" aria-label="f.lux" className="flex w-6 justify-center">
          <svg width="14" height="14" viewBox="0 0 14 14">
            <circle cx="7" cy="7" r="7" fill="#f9bf62" />
            <path d="M0.300 5.500C5 4 10 7 12 12A7 7 0 0 1 0.300 5.500z" fill="#6f8fc4" />
          </svg>
        </button>
        <div className="w-[66px] text-center text-[11px] leading-[18px] text-white">
          11:01 PM
          <br />
          11/6/2016
        </div>
        <button type="button" aria-label="Action Center" className="mr-[10px] flex w-9 justify-center">
          <svg width="16" height="16" viewBox="0 0 16 16" fill="none" stroke="#fff" strokeWidth="1.200">
            <path d="M0.600 0.600h14.800v12H10L8 15l-2-2.400H0.600z" />
          </svg>
        </button>
        <div className="mr-1 h-10 w-px bg-[#444]" />
      </div>
    </div>
  )
}

function Taskbar() {
  return (
    <div className="flex h-10 bg-black">
      <button type="button" aria-label="Start" className="flex w-12 items-center justify-center">
        <svg width="16" height="16" viewBox="0 0 16 16" fill="#fff">
          <path d="M0 2.300L6.500 1.400v6.200H0zM7.300 1.300L16 0v7.600H7.300zM0 8.400h6.500v6.200L0 13.700zM7.300 8.400H16V16l-8.700-1.300z" />
        </svg>
      </button>
      <label className="flex w-[344px] items-center bg-[#333] pr-[15px] pl-[9px]">
        <svg width="22" height="22" viewBox="0 0 22 22" fill="none" stroke="#fff" strokeWidth="2.600">
          <circle cx="11" cy="11" r="9.300" />
        </svg>
        <input
          type="text"
          aria-label="Search"
          placeholder="Ask me anything"
          className="min-w-0 flex-1 bg-transparent pl-[5px] text-sm outline-none placeholder:text-[#a0a0a0]"
        />
        <svg width="12" height="16" viewBox="0 0 12 16" fill="none" stroke="#999">
          <path d="M3.500 0.500h5v10h-5zM0.500 8v4.500h11V8M6 12.500v3M3.500 15.500h5" />
        </svg>
      </label>
      <button type="button" aria-label="Task View" className="mr-[3px] flex w-12 items-center justify-center">
        <svg width="20" height="14" viewBox="0 0 20 14" fill="none" stroke="#fff" strokeWidth="1.200">
          <path d="M4.500 0.600h11v12.800h-11zM2.500 2H0.600v10h1.900M17.500 2h1.900v10h-1.900" />
        </svg>
      </button>
      <div className="flex gap-px">
        {APPS.map((app) => (
          <button
            key={app.name}
            type="button"
            aria-label={app.name}
            className={`relative flex w-12 items-center justify-center ${app.active ? 'bg-[#333]' : ''}`}
          >
            {app.icon}
            {app.running && <span className={`absolute bottom-0 h-[2px] ${app.running}`} />}
          </button>
        ))}
      </div>
      <Tray />
    </div>
  )
}

export default function App() {
  return (
    <div className={`${UI_FONT} flex h-screen flex-col overflow-hidden bg-[#e6e6e6]`}>
      <header className="relative bg-[#217346]">
        <Circuit />
        <TitleBar />
        <TabRow />
      </header>
      <Ribbon />
      <FormulaBar />
      <main className="flex min-h-0 flex-1">
        <Sheet />
        <div className="mr-1 ml-[3px] flex w-[14px] flex-col bg-[#dadada]">
          <div className="h-[2px] bg-[#e6e6e6]" />
          <ScrollArrow label="Scroll up" d="M0 6h8L4 2z" className="h-[15px]" />
          <div className="h-10 border border-[#ababab] bg-white" />
          <ScrollArrow label="Scroll down" d="M0 2h8L4 6z" className="mt-auto h-[15px]" />
        </div>
      </main>
      <SheetTabs />
      <StatusBar />
      <Taskbar />
    </div>
  )
}
